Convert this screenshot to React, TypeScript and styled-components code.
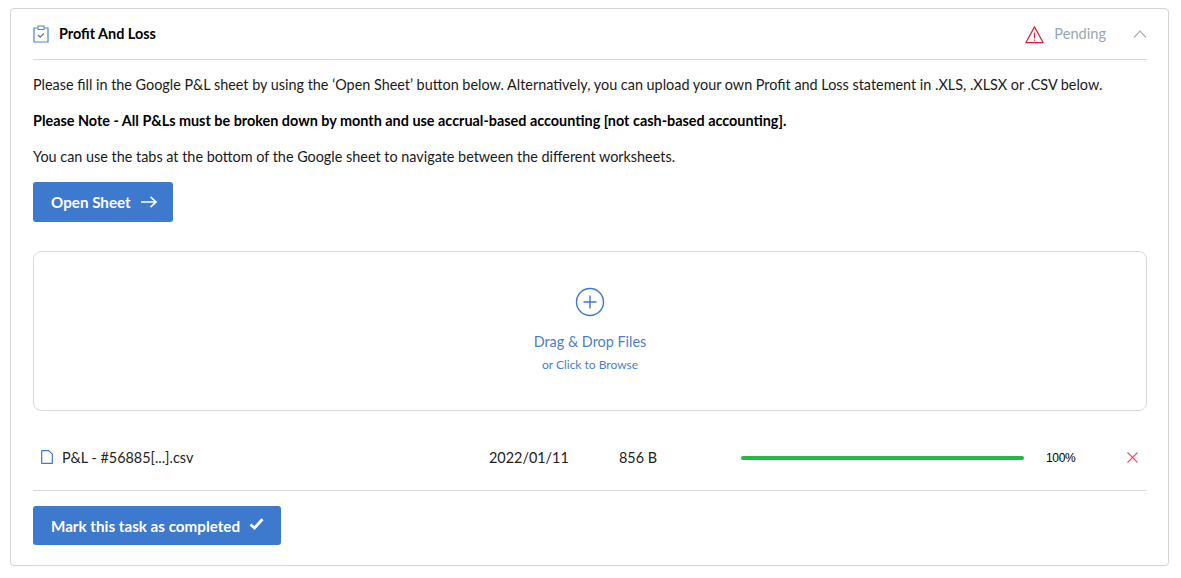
import styled, { createGlobalStyle } from 'styled-components'

const GlobalStyle = createGlobalStyle`
  html, body {
    margin: 0;
    padding: 0;
    background: #fff;
  }
  body {
    font-family: Lato, 'Liberation Sans', sans-serif;
    color: #111;
  }
`

const Page = styled.div`
  padding: 8px 12px 12px 10px;
`

const Card = styled.section`
  box-sizing: border-box;
  height: 558px;
  border: 1px solid #d5d5d5;
  border-radius: 4px;
  padding: 0 21px 0 22px;
`

const Header = styled.header`
  display: flex;
  align-items: center;
  height: 50px;
  border-bottom: 1px solid #d8d8d8;
`

const Title = styled.h2`
  margin: 0 0 2px 10px;
  flex: 1;
  font-size: 14.4px;
  font-weight: 700;
  color: #000;
`

const Status = styled.span`
  margin: 0 27px 2px 10px;
  font-size: 14.6px;
  color: #9ba6b2;
`

const Body = styled.div`
  padding-top: 16px;
`

const Paragraph = styled.p<{ $bold?: boolean; $last?: boolean }>`
  margin: 0 0 ${(p) => (p.$last ? 16 : 18)}px;
  height: 18px;
  font-size: 14.4px;
  line-height: 18px;
  font-weight: ${(p) => (p.$bold ? 700 : 400)};
  color: ${(p) => (p.$bold ? '#000' : '#1a1a1a')};
`

const Button = styled.button<{ $height: number; $gap: number; $paddingRight: number }>`
  display: inline-flex;
  align-items: center;
  gap: ${(p) => p.$gap}px;
  height: ${(p) => p.$height}px;
  padding: 0 ${(p) => p.$paddingRight}px 0 18px;
  border: 0;
  border-radius: 3px;
  background: #3d79cc;
  color: #fff;
  font-family: inherit;
  font-size: 15.2px;
  font-weight: 700;
`

const DropZone = styled.div`
  box-sizing: border-box;
  display: flex;
  flex-direction: column;
  align-items: center;
  height: 160px;
  margin-top: 29px;
  padding-top: 35px;
  border: 1px solid #d5dae5;
  border-radius: 8px;
  color: #4a7fcb;
`

const DropTitle = styled.div`
  margin-top: 15px;
  font-size: 14.4px;
  line-height: 20px;
`

const DropHint = styled.div`
  margin-top: 6px;
  font-size: 12px;
  line-height: 14px;
`

const FileRow = styled.div`
  box-sizing: border-box;
  display: flex;
  align-items: center;
  height: 80px;
  padding-top: 13px;
  border-bottom: 1px solid #d8d8d8;
  font-size: 14.4px;
  color: #222;
`

const FileIcon = styled.span`
  display: flex;
  margin: 0 9px 0 8px;
`

const FileName = styled.span`
  width: 427px;
`

const FileDate = styled.span`
  width: 130px;
`

const FileSize = styled.span`
  width: 122px;
`

const Track = styled.div`
  width: 283px;
  height: 4px;
  margin-top: 2px;
  border-radius: 2px;
  background: #e4e4e4;
  overflow: hidden;
`

const Fill = styled.div`
  height: 100%;
  background: #1dba45;
`

const Percent = styled.span`
  width: 81px;
  margin: 2px 0 0 22px;
  font-family: 'Liberation Sans', sans-serif;
  font-size: 12px;
  letter-spacing: -0.3px;
  color: #000;
`

const Footer = styled.div`
  padding-top: 15px;
`

const RaisedIcon = styled.span`
  display: flex;
  margin-top: -3px;
`

const ClipboardIcon = () => (
  <svg width="16" height="18" viewBox="0 0 16 18" fill="none">
    <path d="M4.5 3H1v14h14V3h-3.5" stroke="#4a86d8" strokeWidth="1.2" />
    <path d="M5 1h6v3.5H5z" stroke="#4a86d8" strokeWidth="1.1" />
    <path d="M5 10l2.2 2.2L11 8.5" stroke="#5a6f9a" strokeWidth="1.1" />
  </svg>
)

const WarningIcon = () => (
  <svg width="19" height="19" viewBox="0 0 20 20" fill="none">
    <path d="M10 2L1 18.5h18z" stroke="#e8193c" strokeWidth="1.3" strokeLinejoin="round" />
    <path d="M10 8v6" stroke="#e8193c" strokeWidth="1.3" />
    <path d="M10 15.2v1.4" stroke="#e8193c" strokeWidth="1.3" />
  </svg>
)

const ChevronIcon = () => (
  <svg width="14" height="8" viewBox="0 0 14 8" fill="none">
    <path d="M1 7.5L7 1.2l6 6.3" stroke="#a9b2bc" strokeWidth="1.2" />
  </svg>
)

const ArrowIcon = () => (
  <svg width="16" height="12" viewBox="0 0 16 12" fill="none">
    <path d="M0 6h15M9.500 .8L15 6l-5.500 5.200" stroke="#fff" strokeWidth="1.600" />
  </svg>
)

const PlusCircleIcon = () => (
  <svg width="30" height="30" viewBox="0 0 30 30" fill="none">
    <circle cx="15" cy="15" r="13.500" stroke="#3d79cc" strokeWidth="1.400" />
    <path d="M15 8.500v13M8.500 15h13" stroke="#3d79cc" strokeWidth="1.400" />
  </svg>
)

const DocumentIcon = () => (
  <svg width="12" height="14" viewBox="0 0 12 14" fill="none">
    <path d="M.7.700h7.100l3.500 3.500v9.100H.700z" stroke="#3d79cc" strokeWidth="1.200" strokeLinejoin="round" />
  </svg>
)

const CloseIcon = () => (
  <svg width="11" height="11" viewBox="0 0 11 11" fill="none">
    <path d="M.5.500l10 10M10.500.500l-10 10" stroke="#f0506c" strokeWidth="1.100" />
  </svg>
)

const CheckIcon = () => (
  <svg width="15" height="12" viewBox="0 0 15 12" fill="none">
    <path d="M1.500 6.500L5.500 10 13.500 1.300" stroke="#fff" strokeWidth="2.800" />
  </svg>
)

export default function App() {
  return (
    <>
      <GlobalStyle />
      <Page>
        <Card>
          <Header>
            <ClipboardIcon />
            <Title>Profit And Loss</Title>
            <WarningIcon />
            <Status>Pending</Status>
            <ChevronIcon />
          </Header>
          <Body>
            <Paragraph>
              Please fill in the Google P&amp;L sheet by using the ‘Open Sheet’ button below. Alternatively, you can upload your own Profit and Loss statement in .XLS, .XLSX or .CSV below.
            </Paragraph>
            <Paragraph $bold>
              Please Note - All P&amp;Ls must be broken down by month and use accrual-based accounting [not cash-based accounting].
            </Paragraph>
            <Paragraph $last>
              You can use the tabs at the bottom of the Google sheet to navigate between the different worksheets.
            </Paragraph>
            <Button $height={40} $gap={10} $paddingRight={16}>
              Open Sheet <ArrowIcon />
            </Button>
            <DropZone>
              <PlusCircleIcon />
              <DropTitle>Drag &amp; Drop Files</DropTitle>
              <DropHint>or Click to Browse</DropHint>
            </DropZone>
            <FileRow>
              <FileIcon>
                <DocumentIcon />
              </FileIcon>
              <FileName>P&amp;L - #56885[...].csv</FileName>
              <FileDate>2022/01/11</FileDate>
              <FileSize>856 B</FileSize>
              <Track>
                <Fill style={{ width: '100%' }} />
              </Track>
              <Percent>100%</Percent>
              <CloseIcon />
            </FileRow>
            <Footer>
              <Button $height={39} $gap={9} $paddingRight={17}>
                Mark this task as completed
                <RaisedIcon>
                  <CheckIcon />
                </RaisedIcon>
              </Button>
            </Footer>
          </Body>
        </Card>
      </Page>
    </>
  )
}
